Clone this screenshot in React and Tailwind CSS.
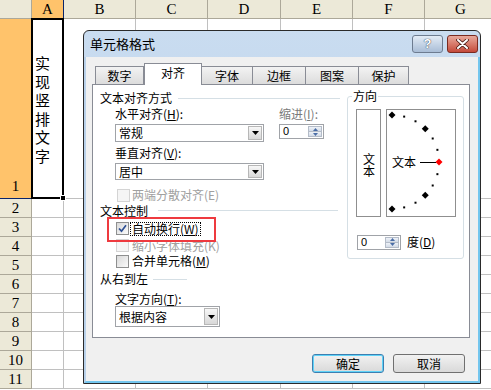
import React from 'react';

const COLS = [
  { l: 'A', w: 'w-[32px]' },
  { l: 'B', w: 'w-[72px]' },
  { l: 'C', w: 'w-[72px]' },
  { l: 'D', w: 'w-[73px]' },
  { l: 'E', w: 'w-[72px]' },
  { l: 'F', w: 'w-[72px]' },
  { l: 'G', w: 'w-[72px]' },
];

const ROWS = [2, 3, 4, 5, 6, 7, 8, 9, 10, 11];

function Sheet() {
  return (
    <div className="font-['Liberation_Serif',serif] text-[15px] text-black">
      {/* column headers */}
      <div className="flex h-[19px]">
        <div className="w-[32px] shrink-0 bg-[#ece9d8] border-r border-b border-[#aca899]" />
        {COLS.map((c) => (
          <div
            key={c.l}
            className={`${c.w} shrink-0 flex items-center justify-center border-r border-b ${
              c.l === 'A' ? 'bg-[#ffc36b] border-[#0a246a]' : 'bg-[#ece9d8] border-[#aca899]'
            }`}
          >
            {c.l}
          </div>
        ))}
      </div>

      {/* row 1 */}
      <div className="flex h-[180px]">
        <div className="w-[32px] shrink-0 bg-[#ffc36b] border-r border-b border-[#0a246a] flex items-end justify-center pb-px">
          1
        </div>
        {COLS.map((c) =>
          c.l === 'A' ? (
            <div key={c.l} className={`${c.w} shrink-0 relative bg-white border-r border-b border-[#c0c0c0]`}>
              <div className="h-full flex items-center pl-[2px] pt-[5px]">
                <span className="[writing-mode:vertical-rl] [text-orientation:upright] tracking-[3.5px] font-['Noto_Sans_CJK_SC',sans-serif] text-[15px] leading-[16px]">
                  实现竖排文字
                </span>
              </div>
              <div className="absolute -left-px -top-px -right-px -bottom-px border-2 border-black" />
              <div className="absolute -right-[3px] -bottom-[3px] w-[6px] h-[6px] bg-black border border-white" />
            </div>
          ) : (
            <div key={c.l} className={`${c.w} shrink-0 bg-white border-r border-b border-[#c0c0c0]`} />
          )
        )}
      </div>

      {ROWS.map((r) => (
        <div key={r} className="flex h-[19px]">
          <div className="w-[32px] shrink-0 bg-[#ece9d8] border-r border-b border-[#aca899] flex items-center justify-center">
            {r}
          </div>
          {COLS.map((c) => (
            <div key={c.l} className={`${c.w} shrink-0 bg-white border-r border-b border-[#c0c0c0]`} />
          ))}
        </div>
      ))}
    </div>
  );
}

function Check({ checked, disabled }) {
  return (
    <span
      className={`w-[13px] h-[13px] shrink-0 border flex items-center justify-center ${
        disabled
          ? 'border-[#d4d4d4] bg-[#f5f5f5]'
          : 'border-[#8e8f8f] bg-linear-to-br from-[#d9d9d9] to-[#fbfbfb]'
      }`}
    >
      {checked && (
        <svg width="9" height="9" viewBox="0 0 9 9">
          <path d="M1 4.5 L3.5 7.2 L8 1.2" stroke="#2e4f93" strokeWidth="1.7" fill="none" />
        </svg>
      )}
    </span>
  );
}

function Select({ value, w, h }) {
  return (
    <div className={`${w} ${h} shrink-0 border border-[#a0a3a8] bg-white flex items-center pl-[3px] pr-px`}>
      <span className="flex-1 leading-none">{value}</span>
      <span className="w-[14px] h-[calc(100%-2px)] border border-[#b7b7b7] bg-linear-to-b from-[#f7f7f7] to-[#d8d8d8] flex items-center justify-center">
        <svg width="7" height="4" viewBox="0 0 7 4">
          <path d="M0 0h7L3.5 4z" fill="#000" />
        </svg>
      </span>
    </div>
  );
}

function Spin({ w }) {
  return (
    <div className={`${w} h-[15px] shrink-0 border border-[#a0a3a8] bg-white flex items-center pl-[3px] pr-px`}>
      <span className="flex-1 text-[11px] leading-none font-['Liberation_Sans',sans-serif]">0</span>
      <span className="w-[14px] h-[11px] flex flex-col border border-[#b4bcc8]">
        <span className="flex-1 bg-linear-to-b from-[#eef2f8] to-[#d3dbe7] flex items-center justify-center border-b border-[#b4bcc8]">
          <svg width="5" height="3" viewBox="0 0 5 3">
            <path d="M0 3h5L2.5 0z" fill="#4a6da6" />
          </svg>
        </span>
        <span className="flex-1 bg-linear-to-b from-[#eef2f8] to-[#d3dbe7] flex items-center justify-center">
          <svg width="5" height="3" viewBox="0 0 5 3">
            <path d="M0 0h5L2.5 3z" fill="#4a6da6" />
          </svg>
        </span>
      </span>
    </div>
  );
}

function Heading({ text, line }) {
  return (
    <div className="h-[16px] flex items-center pl-[7px]">
      <span>{text}</span>
      <span className={`ml-[6px] h-px bg-[#d5dfe5] ${line}`} />
    </div>
  );
}

function Dial() {
  const cx = 5;
  const cy = 52;
  const r = 47;
  const pts = [];
  for (let a = -90; a <= 90; a += 15) {
    const rad = (a * Math.PI) / 180;
    pts.push({ a, x: cx + r * Math.cos(rad), y: cy - r * Math.sin(rad) });
  }
  return (
    <div className="relative w-[70px] h-[108px] border border-[#8f8f8f] bg-white">
      <svg width="68" height="106" viewBox="0 0 68 106" className="absolute left-0 top-0">
        {pts.map((p) =>
          p.a % 45 === 0 ? (
            <polygon
              key={p.a}
              points={`${p.x},${p.y - 3.5} ${p.x + 3.5},${p.y} ${p.x},${p.y + 3.5} ${p.x - 3.5},${p.y}`}
              fill={p.a === 0 ? '#ff0000' : '#000'}
            />
          ) : (
            <rect key={p.a} x={p.x - 1} y={p.y - 1} width="2" height="2" fill="#000" />
          )
        )}
        <line x1="33" y1="52.5" x2="49" y2="52.5" stroke="#000" strokeWidth="1" />
      </svg>
      <span className="absolute left-[5px] top-[45px] text-[12px] leading-[14px]">文本</span>
    </div>
  );
}

function Dialog() {
  const tabs = [
    { t: '数字', w: 'w-[49px]' },
    { t: '对齐', w: 'w-[58px]', sel: true },
    { t: '字体', w: 'w-[52px]' },
    { t: '边框', w: 'w-[54px]' },
    { t: '图案', w: 'w-[54px]' },
    { t: '保护', w: 'w-[51px]' },
  ];
  return (
    <div className="absolute left-[83px] top-[30px] w-[398px] h-[354px] border border-[#2a2a2a] rounded-t-[6px] bg-linear-to-b from-[#c9dcf0] to-[#b6cde7] flex flex-col font-['Noto_Sans_CJK_SC',sans-serif] text-[12px] text-black overflow-hidden">
      {/* title bar */}
      <div className="h-[26px] shrink-0 flex items-start pl-[6px] pr-[2px]">
        <span className="mt-[5px] text-[13px] leading-[16px] flex-1">单元格格式</span>
        <div className="mt-[4px] flex gap-[4px]">
          <div className="w-[31px] h-[18px] rounded-[3px] border border-[#6d7c90] bg-linear-to-b from-[#e3ecf6] to-[#a9bdd6] flex items-center justify-center text-white font-bold text-[13px] font-['Liberation_Sans',sans-serif] [text-shadow:0_0_1px_#3a4658,0_0_1px_#3a4658]">
            ?
          </div>
          <div className="w-[31px] h-[18px] rounded-[3px] border border-[#7a2a20] bg-linear-to-b from-[#e7a89b] to-[#c4493a] flex items-center justify-center">
            <svg width="13" height="10" viewBox="0 0 13 10">
              <path d="M2 1 L11 9 M11 1 L2 9" stroke="#4a1a14" strokeWidth="3.6" strokeLinecap="round" />
              <path d="M2 1 L11 9 M11 1 L2 9" stroke="#ffffff" strokeWidth="2" strokeLinecap="round" />
            </svg>
          </div>
        </div>
      </div>

      {/* body */}
      <div className="flex-1 flex border-l-2 border-[#b9d1ea] border-r-2 border-r-[#74c6ee] border-b-2 border-b-[#74c6ee]">
        <div className="flex-1 bg-[#f0f0f0] pl-[6px] pr-[8px] pt-[6px] flex flex-col">
          {/* tabs */}
          <div className="h-[21px] flex items-end pl-[3px] relative z-10">
            {tabs.map((tab) => (
              <div
                key={tab.t}
                className={`${tab.w} shrink-0 flex items-center justify-center border border-b-0 border-[#898c95] ${
                  tab.sel
                    ? 'h-[22px] -mb-px bg-white pb-[3px]'
                    : 'h-[18px] bg-linear-to-b from-[#f3f3f3] to-[#dcdcdc] -ml-px first:ml-0'
                }`}
              >
                {tab.t}
              </div>
            ))}
          </div>

          {/* panel */}
          <div className="relative h-[254px] border border-[#898c95] bg-white flex">
            <div className="w-[254px] shrink-0 flex flex-col pt-[5px]">
              <Heading text="文本对齐方式" line="w-[162px]" />
              <div className="h-[16px] flex items-center pl-[22px]">
                <span className="w-[164px]">
                  水平对齐(<u>H</u>):
                </span>
                <span className="text-[#7a7a7a]">
                  缩进(<u>I</u>):
                </span>
              </div>
              <div className="mt-[2px] h-[18px] flex items-start pl-[22px]">
                <Select value="常规" w="w-[149px]" h="h-[18px]" />
                <div className="ml-[15px]">
                  <Spin w="w-[45px]" />
                </div>
              </div>
              <div className="mt-[3px] h-[16px] flex items-center pl-[22px]">
                垂直对齐(<u>V</u>):
              </div>
              <div className="mt-[2px] pl-[22px]">
                <Select value="居中" w="w-[149px]" h="h-[17px]" />
              </div>
              <div className="mt-[7px] h-[16px] flex items-center pl-[24px] text-[#a0a0a0]">
                <Check disabled />
                <span className="ml-[2px]">两端分散对齐(E)</span>
              </div>
              <div className="h-[15px] flex items-center pl-[7px]">
                <span>文本控制</span>
                <span className="ml-[10px] w-[180px] h-px bg-[#d5dfe5]" />
              </div>
              <div className="mt-px h-[19px] flex items-center pl-[23px]">
                <Check checked />
                <span className="ml-px px-px border border-dotted border-black leading-[12px]">
                  自动换行(<u>W</u>)
                </span>
              </div>
              <div className="h-[15px] flex items-center pl-[23px] text-[#a0a0a0]">
                <Check disabled />
                <span className="ml-[3px]">缩小字体填充(K)</span>
              </div>
              <div className="h-[16px] flex items-center pl-[23px]">
                <Check />
                <span className="ml-[3px]">
                  合并单元格(<u>M</u>)
                </span>
              </div>
              <div className="mt-[2px] h-[16px] flex items-center pl-[7px]">
                <span>从右到左</span>
                <span className="ml-[5px] w-[34px] h-px bg-[#d5dfe5]" />
              </div>
              <div className="mt-[4px] h-[15px] flex items-center pl-[22px]">
                文字方向(<u>T</u>):
              </div>
              <div className="pl-[22px]">
                <Select value="根据内容" w="w-[105px]" h="h-[21px]" />
              </div>
            </div>

            {/* orientation group */}
            <div className="mt-[11px] w-[117px] h-[163px] relative border border-[#d5dfe5] rounded-[3px] pl-[8px] pt-[12px]">
              <span className="absolute left-[4px] -top-[8px] px-px bg-white leading-[14px]">方向</span>
              <div className="flex gap-[5px]">
                <div className="w-[25px] h-[108px] border border-[#8f8f8f] bg-white flex items-center justify-center pt-[4px]">
                  <span className="[writing-mode:vertical-rl] [text-orientation:upright] leading-[12px]">文本</span>
                </div>
                <Dial />
              </div>
              <div className="mt-[16px] flex items-center">
                <div className="ml-px">
                  <Spin w="w-[44px]" />
                </div>
                <span className="ml-[6px]">
                  度(<u>D</u>)
                </span>
              </div>
            </div>

            {/* highlight annotation */}
            <div className="absolute left-[14px] top-[132px] w-[109px] h-[25px] border-2 border-[#ee3a3f]" />
          </div>

          {/* buttons */}
          <div className="mt-[16px] flex justify-end gap-[9px] pr-[5px]">
            <div className="w-[72px] h-[19px] rounded-[3px] border border-[#3c7fb1] shadow-[inset_0_0_0_1px_#5fd3f8] bg-linear-to-b from-[#f2f2f2] to-[#d9d9d9] flex items-center justify-center">
              确定
            </div>
            <div className="w-[72px] h-[19px] rounded-[3px] border border-[#707070] bg-linear-to-b from-[#f2f2f2] to-[#d9d9d9] flex items-center justify-center">
              取消
            </div>
          </div>
        </div>
      </div>
    </div>
  );
}

export default function App() {
  return (
    <div className="relative w-[491px] h-[390px] overflow-hidden bg-white">
      <Sheet />
      <Dialog />
    </div>
  );
}
